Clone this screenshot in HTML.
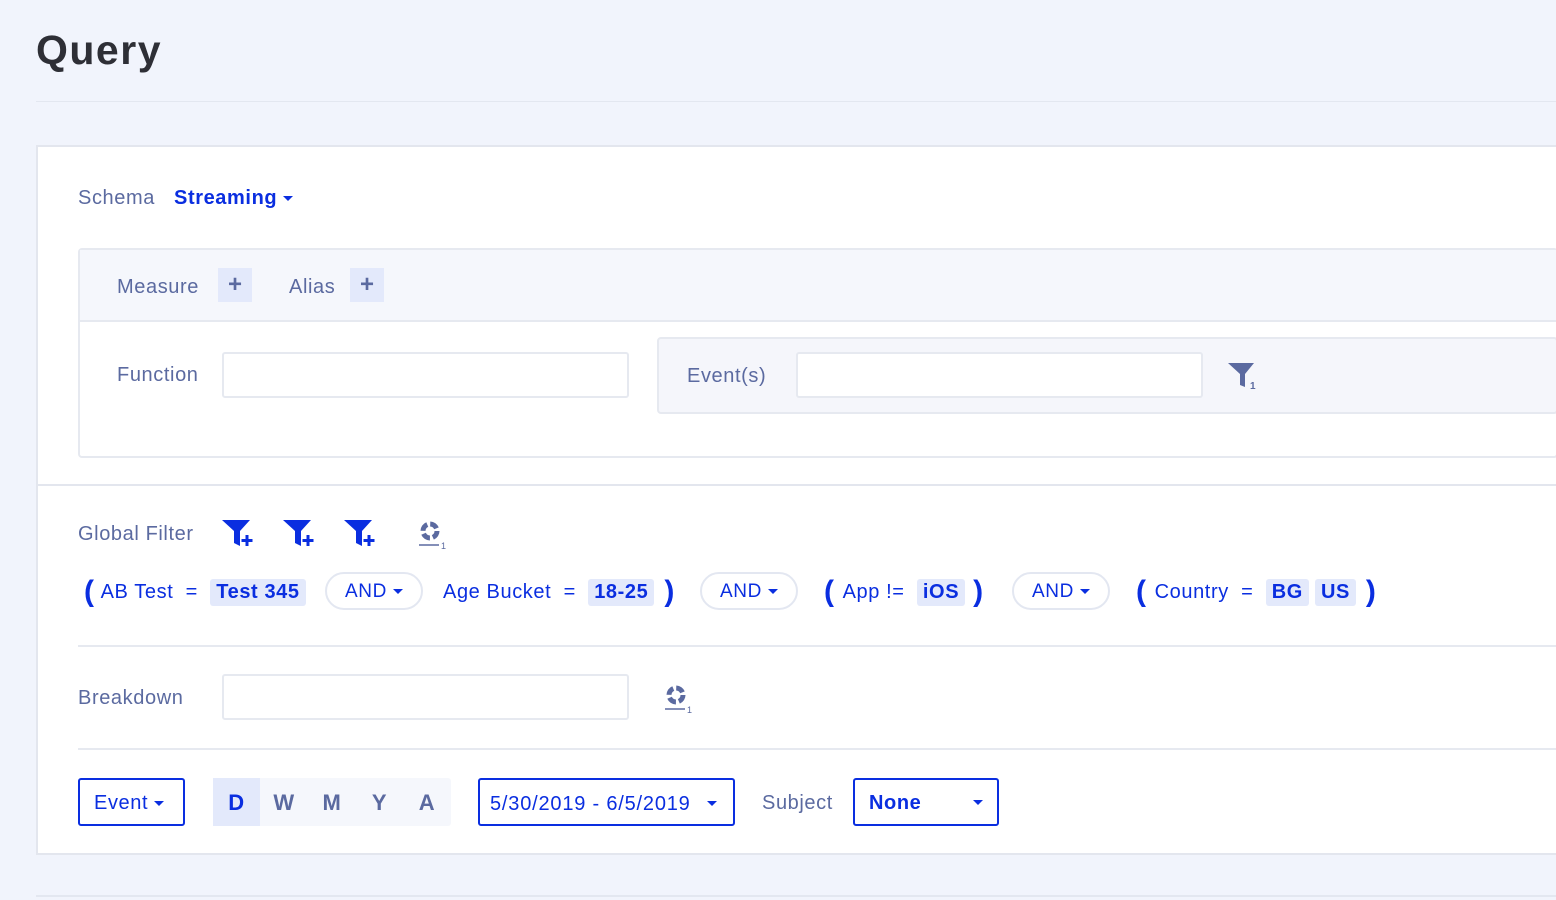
<!DOCTYPE html>
<html><head><style>
*{box-sizing:border-box;margin:0;padding:0}
body{width:1556px;height:900px;background:#f1f4fc;font-family:"Liberation Sans",sans-serif;position:relative;overflow:hidden;color:#5b6aa0;letter-spacing:0.6px}
.a{position:absolute}
.lbl{font-size:20px;color:#5b6aa0}
.inp{position:absolute;height:46px;width:407px;background:#fff;border:2px solid #e6e9f0;border-radius:3px}
.chip{background:#e3e9fb;color:#0a2ee0;font-weight:bold;padding:2px 6px;border-radius:3px}
.and{position:absolute;height:38px;border:2px solid #e3e7f1;border-radius:20px;color:#0a2ee0;font-size:19px;line-height:36px;text-align:center}
.par{font-size:30px;color:#0a2ee0;font-weight:bold}
.tri{display:inline-block;width:0;height:0;border-left:5px solid transparent;border-right:5px solid transparent;border-top:5px solid currentColor;vertical-align:middle;margin-left:6px}
.ft{font-size:20px;color:#0a2ee0;white-space:nowrap}
</style></head><body>
<div class="a" style="left:36px;top:27px;font-size:41px;font-weight:bold;color:#2e2f36;letter-spacing:1.5px">Query</div>
<div class="a" style="left:36px;top:101px;right:0;height:1px;background:#e3e7f0"></div>
<div class="a" style="left:36px;top:145px;right:-2px;height:710px;background:#fff;border:2px solid #e3e6ee"></div>
<div class="a lbl" style="left:78px;top:187px">Schema</div>
<div class="a" style="left:174px;top:187px;font-size:20px;font-weight:bold;color:#0a2ee0">Streaming<span class="tri"></span></div>
<div class="a" style="left:78px;top:248px;right:-2px;height:210px;border:2px solid #e6e9f0;border-radius:4px"></div>
<div class="a" style="left:80px;top:250px;right:0;height:72px;background:#f5f7fc;border-bottom:2px solid #e6e9f0"></div>
<div class="a lbl" style="left:117px;top:276px">Measure</div>
<div class="a" style="left:218px;top:268px;width:34px;height:34px;background:#e3e9fb;color:#5b6aa0;font-size:24px;font-weight:bold;text-align:center;line-height:33px;letter-spacing:0">+</div>
<div class="a lbl" style="left:289px;top:276px">Alias</div>
<div class="a" style="left:350px;top:268px;width:34px;height:34px;background:#e3e9fb;color:#5b6aa0;font-size:24px;font-weight:bold;text-align:center;line-height:33px;letter-spacing:0">+</div>
<div class="a lbl" style="left:117px;top:364px">Function</div>
<div class="inp" style="left:222px;top:352px"></div>
<div class="a" style="left:657px;top:337px;right:-2px;height:77px;background:#f5f6fb;border:2px solid #e6e9f0;border-radius:4px"></div>
<div class="a lbl" style="left:687px;top:365px">Event(s)</div>
<div class="inp" style="left:796px;top:352px"></div>
<svg class="a" style="left:1226px;top:361px" width="32" height="30" viewBox="0 0 32 30"><path d="M2 2h26l-9 11v13l-5-2V13z" fill="#5b6aa0"/><text x="24" y="28" font-size="10" font-family="Liberation Sans" fill="#5b6aa0" font-weight="bold">1</text></svg>
<div class="a" style="left:38px;top:484px;right:0;height:2px;background:#e3e6ee"></div>
<div class="a lbl" style="left:78px;top:523px">Global Filter</div>
<svg class="a" style="left:221px;top:519px" width="36" height="32" viewBox="0 0 36 32"><path d="M1 1h28l-10 11v15l-6-3V12z" fill="#0a2ee0"/><path d="M26 16v11M20.5 21.5h11" stroke="#0a2ee0" stroke-width="3"/></svg>
<svg class="a" style="left:282px;top:519px" width="36" height="32" viewBox="0 0 36 32"><path d="M1 1h28l-10 11v15l-6-3V12z" fill="#0a2ee0"/><path d="M26 16v11M20.5 21.5h11" stroke="#0a2ee0" stroke-width="3"/></svg>
<svg class="a" style="left:343px;top:519px" width="36" height="32" viewBox="0 0 36 32"><path d="M1 1h28l-10 11v15l-6-3V12z" fill="#0a2ee0"/><path d="M26 16v11M20.5 21.5h11" stroke="#0a2ee0" stroke-width="3"/></svg>
<svg class="a" style="left:417px;top:520px" width="30" height="30" viewBox="0 0 30 30"><circle cx="13" cy="11" r="7" fill="none" stroke="#5b6aa0" stroke-width="5" stroke-dasharray="8 3"/><path d="M2 25h20" stroke="#5b6aa0" stroke-width="1.5"/><text x="24" y="29" font-size="9" fill="#5b6aa0" font-family="Liberation Sans">1</text></svg>
<div class="a" style="left:84px;top:575px;display:flex;align-items:center;gap:0">
<span class="par">(</span><span class="ft" style="margin-left:6px">AB Test&nbsp; =&nbsp;&nbsp;</span><span class="chip ft">Test 345</span></div>
<div class="and" style="left:325px;top:572px;width:98px">AND<span class="tri"></span></div>
<div class="a" style="left:443px;top:575px;display:flex;align-items:center"><span class="ft">Age Bucket&nbsp; =&nbsp;&nbsp;</span><span class="chip ft">18-25</span><span class="par" style="margin-left:10px">)</span></div>
<div class="and" style="left:700px;top:572px;width:98px">AND<span class="tri"></span></div>
<div class="a" style="left:824px;top:575px;display:flex;align-items:center"><span class="par">(</span><span class="ft" style="margin-left:8px">App&nbsp;!=&nbsp;&nbsp;</span><span class="chip ft">iOS</span><span class="par" style="margin-left:8px">)</span></div>
<div class="and" style="left:1012px;top:572px;width:98px">AND<span class="tri"></span></div>
<div class="a" style="left:1136px;top:575px;display:flex;align-items:center"><span class="par">(</span><span class="ft" style="margin-left:8px">Country&nbsp; =&nbsp;&nbsp;</span><span class="chip ft">BG</span><span class="chip ft" style="margin-left:6px">US</span><span class="par" style="margin-left:10px">)</span></div>
<div class="a" style="left:78px;top:645px;right:0;height:2px;background:#e6e9f0"></div>
<div class="a lbl" style="left:78px;top:687px">Breakdown</div>
<div class="inp" style="left:222px;top:674px"></div>
<svg class="a" style="left:663px;top:684px" width="30" height="30" viewBox="0 0 30 30"><circle cx="13" cy="11" r="7" fill="none" stroke="#5b6aa0" stroke-width="5" stroke-dasharray="8 3"/><path d="M2 25h20" stroke="#5b6aa0" stroke-width="1.5"/><text x="24" y="29" font-size="9" fill="#5b6aa0" font-family="Liberation Sans">1</text></svg>
<div class="a" style="left:78px;top:748px;right:0;height:2px;background:#e6e9f0"></div>
<div class="a" style="left:78px;top:778px;width:107px;height:48px;border:2px solid #0a2ee0;border-radius:3px;color:#0a2ee0;font-size:20px;line-height:46px;padding-left:14px">Event<span class="tri"></span></div>
<div class="a" style="left:213px;top:778px;width:238px;height:48px;background:#f5f7fc;border-radius:3px;display:flex;font-size:22px;font-weight:bold;line-height:50px;text-align:center">
<div style="width:47px;background:#e3e9fb;color:#0a2ee0">D</div><div style="width:48px">W</div><div style="width:48px">M</div><div style="width:47px">Y</div><div style="width:48px">A</div></div>
<div class="a" style="left:478px;top:778px;width:257px;height:48px;border:2px solid #0a2ee0;border-radius:3px;color:#0a2ee0;font-size:20px;line-height:48px;padding-left:10px;letter-spacing:0.8px">5/30/2019 - 6/5/2019<span class="tri" style="position:absolute;right:16px;top:21px"></span></div>
<div class="a lbl" style="left:762px;top:792px">Subject</div>
<div class="a" style="left:853px;top:778px;width:146px;height:48px;border:2px solid #0a2ee0;border-radius:3px;color:#0a2ee0;font-size:20px;font-weight:bold;line-height:46px;padding-left:14px">None<span class="tri" style="position:absolute;right:14px;top:20px"></span></div>
<div class="a" style="left:36px;top:895px;right:0;height:2px;background:#e3e7f0"></div>
</body></html>
